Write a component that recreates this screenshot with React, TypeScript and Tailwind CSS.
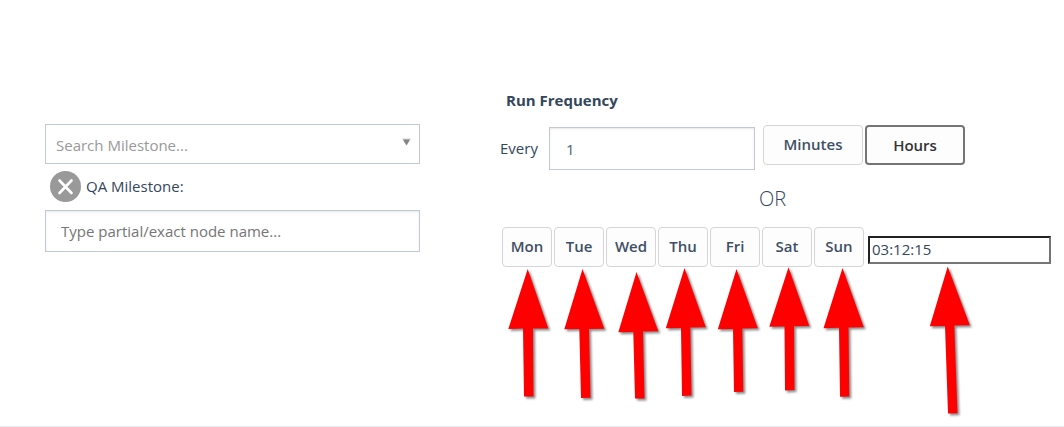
const days = ["Mon", "Tue", "Wed", "Thu", "Fri", "Sat", "Sun"];

const arrows = [
  "527.7,269 548.3,328.5 533,328.5 533.5,396.5 524,396.5 523,328.5 508.3,329",
  "582.5,269 604.3,328.8 589,329 590.5,397.8 581,398 579.3,329 564.3,329.3",
  "636.5,272 658.3,331.3 643,331.5 644.5,398.5 635,398.5 633.3,332 618.3,332.3",
  "684.5,268 705.8,327.2 690.3,327.5 691.5,395.5 682,396 681,328 665.8,328.3",
  "736.5,269 757.8,328.3 742.3,328.5 743.3,391.8 734,392 733,329 717.8,329.3",
  "788.5,267.2 809.3,326 794,326.2 794.5,390 785,390.5 784.5,326.5 769.3,326.8",
  "842.5,268 863.8,327.2 848.5,327.5 849.3,396.5 840,396.8 839,327.7 823.5,328.2",
  "947.7,266.5 969.8,325.3 954.3,325.5 957.5,413.3 948,413.6 945,326 929.8,326.3",
];

const button =
  "h-10 shrink-0 rounded border border-[#d3d5d8] bg-[#fdfdfd] pb-0.5 text-center font-semibold text-[#3d4f66]";
const field = "border border-[#c1c8d6] bg-white";

export default function App() {
  return (
    <main className="overflow-hidden border-b border-[#e6ebf0] bg-white pr-3 pb-[159px] pl-[45px] font-['Open_Sans','Noto_Sans',sans-serif] text-[15px] leading-5 text-[#34465c]">
      <div className="grid grid-cols-[minmax(0,375fr)_minmax(552px,552fr)] gap-x-20 pt-[90px]">
        <section className="flex flex-col pt-[34px]">
          <div className="relative">
            <select
              aria-label="Search Milestone"
              defaultValue=""
              className={`${field} h-10 w-full appearance-none px-2.5 pt-0.5 text-[#999999]`}
            >
              <option value="">Search Milestone...</option>
            </select>
            <svg
              className="pointer-events-none absolute top-3.5 right-2 h-2 w-2.5"
              viewBox="0 0 10 8"
              aria-hidden="true"
            >
              <path d="M0 .5h9L4.5 8z" fill="#d2d2d2" />
              <path d="M1 1.5h7L4.5 7.3z" fill="#858585" />
            </svg>
          </div>
          <div className="flex h-[46px] items-center gap-[5px] pb-0.5 pl-[5px]">
            <button type="button" aria-label="Remove QA Milestone" className="shrink-0">
              <svg className="size-[31px]" viewBox="0 0 31 31" aria-hidden="true">
                <circle cx="15.5" cy="15.5" r="15.5" fill="#999999" />
                <path
                  d="M9.5 9.5l12 12.5M21.500 9.500L9.500 22"
                  stroke="#fff"
                  strokeWidth="2.6"
                  strokeLinecap="round"
                />
              </svg>
            </button>
            <label htmlFor="node">QA Milestone:</label>
          </div>
          <input
            id="node"
            type="text"
            placeholder="Type partial/exact node name..."
            className={`${field} h-[42px] w-full px-[15px] shadow-[inset_0_1px_2px_#e8e8e8] placeholder:text-[#757575]`}
          />
        </section>

        <section>
          <h2 className="pl-1.5 font-bold">Run Frequency</h2>
          <div className="flex items-start pt-[15px]">
            <label htmlFor="every" className="w-[49px] shrink-0 pt-[13px]">
              Every
            </label>
            <input
              id="every"
              type="text"
              defaultValue="1"
              className={`${field} mt-0.5 mr-2 h-[43px] w-[206px] px-4 text-[#4c6178] shadow-[inset_0_1px_2px_#e8e8e8]`}
            />
            <div className="flex gap-0.5">
              <button type="button" className={`${button} w-[100px]`}>
                Minutes
              </button>
              <button
                type="button"
                aria-pressed="true"
                className="h-10 w-[100px] rounded border-2 border-[#757575] bg-[#fdfdfd] font-semibold text-[#333333]"
              >
                Hours
              </button>
            </div>
          </div>
          <p className="pt-[15px] pb-3.5 pl-[259px] text-xl leading-7 font-light">OR</p>
          <div className="relative ml-0.5 flex items-start gap-0.5">
            {days.map((day) => (
              <button key={day} type="button" className={`${button} w-[50px]`}>
                {day}
              </button>
            ))}
            <input
              type="text"
              aria-label="Run time"
              defaultValue="03:12:15"
              className="mt-[9px] ml-0.5 h-7 w-[183px] border-2 border-t-[#202124] border-r-[#757575] border-b-[#757575] border-l-[#202124] bg-white px-0.5 pb-0.5"
            />
            <svg
              className="pointer-events-none absolute top-0 left-0 h-[200px] w-[562px] max-w-none overflow-visible drop-shadow-[2px_2px_1px_rgba(0,0,0,0.45)]"
              viewBox="502 227 562 200"
              aria-hidden="true"
            >
              {arrows.map((points) => (
                <polygon key={points} points={points} fill="#ff0000" />
              ))}
            </svg>
          </div>
        </section>
      </div>
    </main>
  );
}
